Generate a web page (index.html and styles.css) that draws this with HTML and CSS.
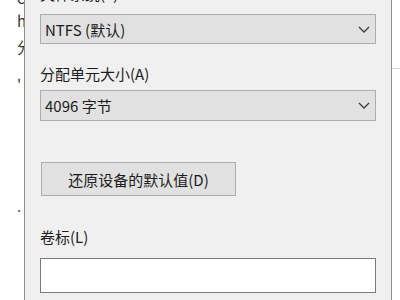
FILE: index.html
```html
<!DOCTYPE html>
<html lang="zh-CN">
<head>
<meta charset="utf-8">
<link rel="stylesheet" href="styles.css">
</head>
<body>
<div class="screen">
  <div class="behind">
    <div class="bl l1">c</div>
    <div class="bl l2">h</div>
    <div class="bl l3">分</div>
    <div class="bl l4">'</div>
    <div class="bl l5">.</div>
  </div>
  <div class="dialog">
    <div class="label first">文件系统(F)</div>
    <div class="select s1">
      <span>NTFS (默认)</span>
      <svg class="chev" width="12" height="7" viewBox="0 0 12 7"><path d="M1 1 L6 6 L11 1" fill="none" stroke="#3a3a3a" stroke-width="1.3"/></svg>
    </div>
    <div class="label second">分配单元大小(A)</div>
    <div class="select s2">
      <span>4096 字节</span>
      <svg class="chev" width="12" height="7" viewBox="0 0 12 7"><path d="M1 1 L6 6 L11 1" fill="none" stroke="#3a3a3a" stroke-width="1.3"/></svg>
    </div>
    <div class="button">还原设备的默认值(D)</div>
    <div class="label third">卷标(L)</div>
    <div class="input"></div>
  </div>
  <div class="right">
    <div class="rline"></div>
  </div>
</div>
</body>
</html>
```
FILE: styles.css
```css
html, body {
  margin: 0;
  padding: 0;
  background: #ffffff;
}
.screen {
  width: 400px;
  height: 300px;
  display: flex;
  overflow: hidden;
  font-family: "Noto Sans CJK SC", "Noto Sans", sans-serif;
  color: #1c1c1c;
}
.behind {
  width: 24px;
  flex: none;
  overflow: hidden;
  background: #ffffff;
  padding-left: 17px;
  box-sizing: border-box;
  font-size: 15px;
  color: #333;
}
.bl {
  line-height: 20px;
  height: 20px;
  white-space: nowrap;
}
.l1 { margin-top: -12px; }
.l2 { margin-top: 3px; }
.l3 { margin-top: 6px; }
.l4 { margin-top: 19px; }
.l5 { margin-top: 100px; color: #555; }
.dialog {
  width: 368px;
  flex: none;
  box-sizing: border-box;
  background: #f0f0f0;
  border-left: 1px solid #8e8e8e;
  border-right: 1px solid #8e8e8e;
  padding-left: 15px;
  display: flex;
  flex-direction: column;
  align-items: flex-start;
}
.label {
  font-size: 15px;
  line-height: 20px;
  height: 20px;
  white-space: nowrap;
}
.label.first { margin-top: -16px; }
.label.second { margin-top: 20px; }
.label.third { margin-top: 31px; }
.select {
  width: 336px;
  height: 30px;
  box-sizing: border-box;
  background: #e1e1e1;
  border: 1px solid #adadad;
  display: flex;
  align-items: center;
  justify-content: space-between;
  padding: 0 5px 0 4px;
  font-size: 15px;
}
.s1 { margin-top: 10px; }
.s2 { margin-top: 6px; height: 31px; }
.chev { margin-right: 0; }
.button {
  margin-top: 41px;
  margin-left: 1px;
  width: 195px;
  height: 34px;
  box-sizing: border-box;
  background: #e1e1e1;
  border: 1px solid #adadad;
  display: flex;
  align-items: center;
  justify-content: center;
  font-size: 15px;
}
.input {
  margin-top: 11px;
  width: 336px;
  height: 35px;
  box-sizing: border-box;
  background: #ffffff;
  border: 1px solid #7a7a7a;
}
.right {
  flex: 1;
  background: #ffffff;
  padding-top: 68px;
}
.rline {
  height: 1px;
  background: #d4d4d4;
}
```
